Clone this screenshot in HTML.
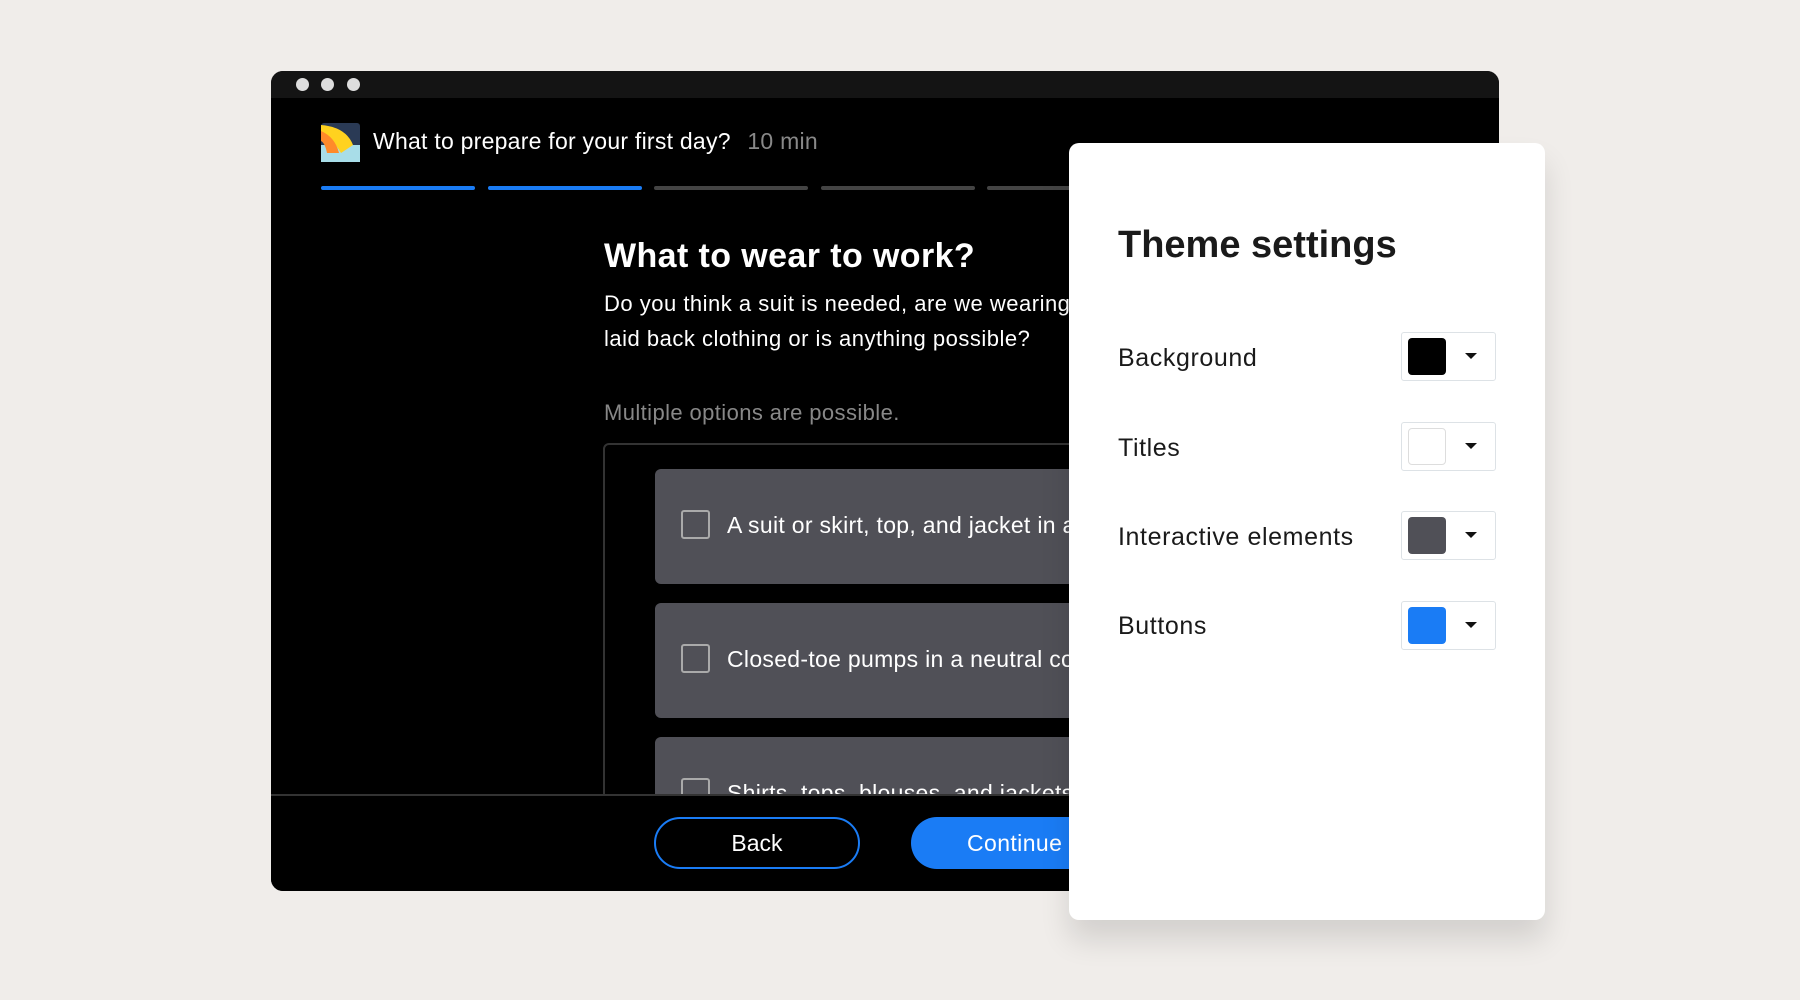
<!DOCTYPE html>
<html><head><meta charset="utf-8"><style>
*{margin:0;padding:0;box-sizing:border-box}
body{width:1800px;height:1000px;background:#f0edea;font-family:"Liberation Sans",sans-serif;position:relative;overflow:hidden}
.win{position:absolute;left:271px;top:71px;width:1228px;height:820px;background:#000;border-radius:12px;overflow:hidden}
.bar{position:absolute;left:0;top:0;width:100%;height:27px;background:#141414}
.dot{position:absolute;top:7px;width:13px;height:13px;border-radius:50%;background:#ddd}
.a{position:absolute;white-space:nowrap}
.seg{position:absolute;top:115px;height:4px;border-radius:2px;width:154px}
.card{position:absolute;left:384px;width:900px;height:115px;background:#505057;border-radius:6px;overflow:hidden}
.cb{position:absolute;left:26px;width:29px;height:29px;border:2px solid #aaa;border-radius:3px}
.ct{position:absolute;left:72px;color:#fff;font-size:23px;letter-spacing:.3px}
.panel{position:absolute;left:1069px;top:143px;width:476px;height:777px;background:#fff;border-radius:10px;box-shadow:0 20px 30px rgba(0,0,0,.12)}
.lbl{position:absolute;left:49px;font-size:25px;color:#1a1a1a;letter-spacing:.6px}
.sel{position:absolute;left:332px;width:95px;height:49px;border:1.5px solid #dde2e6;border-radius:3px;background:#fff}
.sw{position:absolute;left:6px;top:5px;width:38px;height:37px;border-radius:4px}
.ar{position:absolute;left:63px;top:20px;width:0;height:0;border-left:6px solid transparent;border-right:6px solid transparent;border-top:6px solid #111}
</style></head><body>
<div class="win">
 <div class="bar"></div>
 <div class="dot" style="left:25px"></div><div class="dot" style="left:50px"></div><div class="dot" style="left:76px"></div>
 <svg class="a" style="left:50px;top:52px" width="39" height="39" viewBox="0 0 39 39"><rect width="39" height="39" rx="3" fill="#2a3a55"/><rect y="22" width="39" height="17" fill="#a8dde8"/><path d="M0 2 Q25 4 32 22 L20 30 Q12 16 0 12Z" fill="#ffd21f"/><path d="M0 8 Q14 14 18 30 L6 30 Q4 20 0 18Z" fill="#ff8a2a"/></svg>
 <div class="a" style="left:102px;top:57px;font-size:23px;color:#fff;letter-spacing:.25px">What to prepare for your first day? <span style="color:#888;margin-left:10px">10 min</span></div>
 <div class="seg" style="left:50px;background:#1a7cf5"></div>
 <div class="seg" style="left:217px;background:#1a7cf5"></div>
 <div class="seg" style="left:383px;background:#444"></div>
 <div class="seg" style="left:550px;background:#444"></div>
 <div class="seg" style="left:716px;background:#444"></div>
 <div class="a" style="left:333px;top:166px;font-size:34px;font-weight:bold;color:#fff;letter-spacing:.4px">What to wear to work?</div>
 <div class="a" style="left:333px;top:215px;font-size:22px;color:#fff;line-height:35px;letter-spacing:.5px">Do you think a suit is needed, are we wearing<br>laid back clothing or is anything possible?</div>
 <div class="a" style="left:333px;top:329px;font-size:22px;color:#888;letter-spacing:.4px">Multiple options are possible.</div>
 <div class="a" style="left:332px;top:372px;width:900px;height:360px;border:2px solid #333;border-radius:6px"></div>
 <div class="card" style="top:398px"><div class="cb" style="top:41px"></div><div class="ct" style="top:43px">A suit or skirt, top, and jacket in a neutral color</div></div>
 <div class="card" style="top:532px"><div class="cb" style="top:41px"></div><div class="ct" style="top:43px">Closed-toe pumps in a neutral color</div></div>
 <div class="card" style="top:666px"><div class="cb" style="top:41px"></div><div class="ct" style="top:43px">Shirts, tops, blouses, and jackets</div></div>
 <div class="a" style="left:0;top:723px;width:100%;height:97px;background:#000;border-top:2px solid #333"></div>
 <div class="a" style="left:383px;top:746px;width:206px;height:52px;border:2px solid #1a7cf5;border-radius:26px;color:#fff;font-size:23px;text-align:center;line-height:48px">Back</div>
 <div class="a" style="left:640px;top:746px;width:250px;height:52px;background:#1a7cf5;border-radius:26px;color:#fff;font-size:23px;line-height:52px;padding-left:56px;letter-spacing:.4px">Continue</div>
</div>
<div class="panel">
 <div class="a" style="left:49px;top:81px;font-size:38px;font-weight:bold;color:#1a1a1a">Theme settings</div>
 <div class="lbl" style="top:201px">Background</div>
 <div class="sel" style="top:189px"><div class="sw" style="background:#000"></div><div class="ar"></div></div>
 <div class="lbl" style="top:291px">Titles</div>
 <div class="sel" style="top:279px"><div class="sw" style="background:#fff;border:1.5px solid #ddd"></div><div class="ar"></div></div>
 <div class="lbl" style="top:380px">Interactive elements</div>
 <div class="sel" style="top:368px"><div class="sw" style="background:#505057"></div><div class="ar"></div></div>
 <div class="lbl" style="top:469px">Buttons</div>
 <div class="sel" style="top:458px"><div class="sw" style="background:#1a7cf5"></div><div class="ar"></div></div>
</div>
</body></html>
